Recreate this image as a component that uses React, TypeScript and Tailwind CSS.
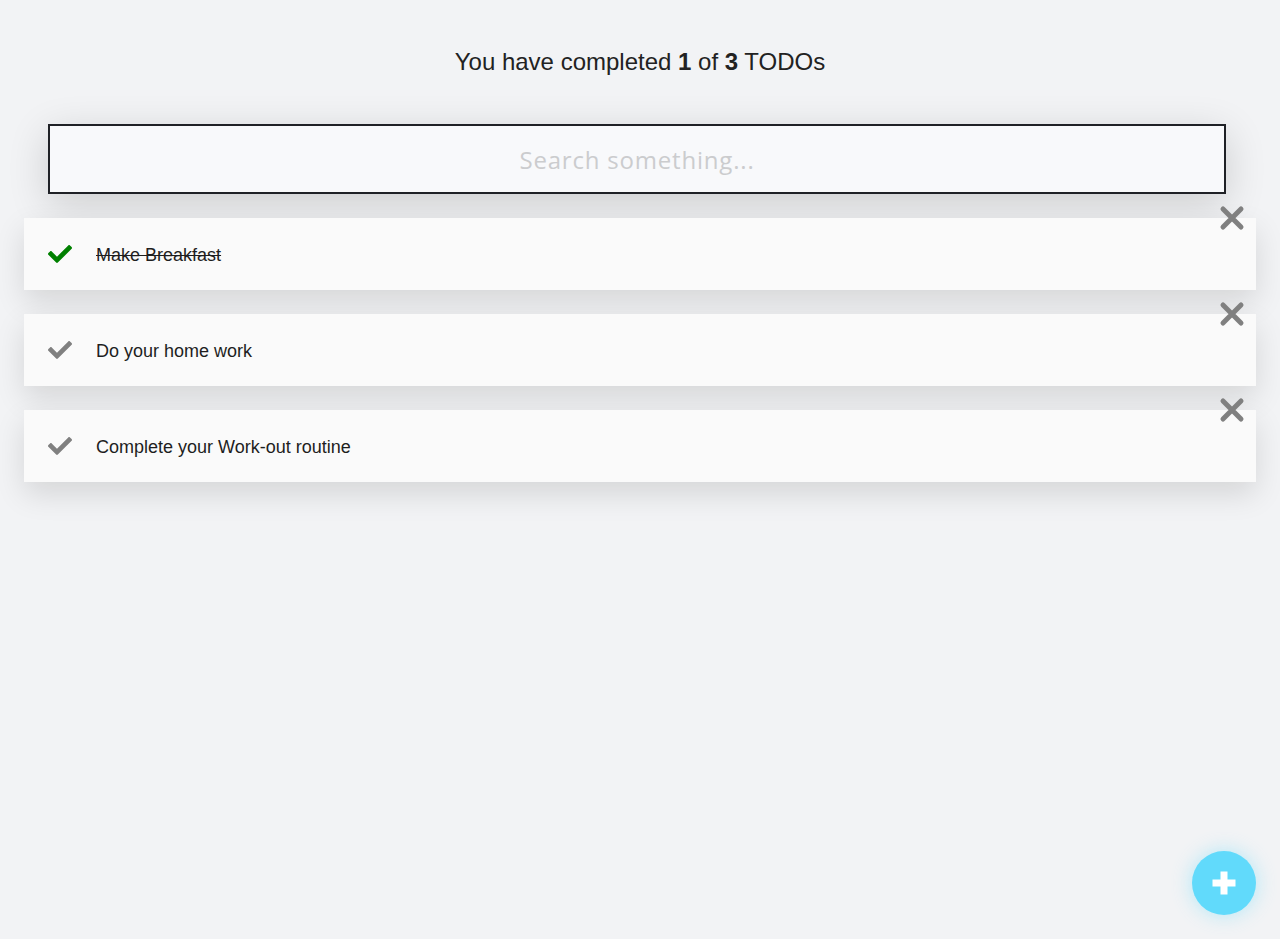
import React, { useState } from 'react';
import { FaCheck } from 'react-icons/fa';

type Todo = { id: number; title: string; done: boolean };

const initial: Todo[] = [
  { id: 1, title: 'Make Breakfast', done: true },
  { id: 2, title: 'Do your home work', done: false },
  { id: 3, title: 'Complete your Work-out routine', done: false },
];

function CloseIcon() {
  return (
    <svg width="26" height="26" viewBox="0 0 26 26" fill="none">
      <path d="M4 4 L22 22 M22 4 L4 22" stroke="#808080" strokeWidth="5" strokeLinecap="round" />
    </svg>
  );
}

function PlusIcon() {
  return (
    <svg width="24" height="24" viewBox="0 0 24 24" fill="white">
      <path d="M8.5 0.5h7v8h8v7h-8v8h-7v-8h-8v-7h8z" />
    </svg>
  );
}

export default function App() {
  const [todos, setTodos] = useState(initial);
  const [query, setQuery] = useState('');
  const completed = todos.filter((t) => t.done).length;

  const toggle = (id: number) =>
    setTodos(todos.map((t) => (t.id === id ? { ...t, done: !t.done } : t)));
  const remove = (id: number) => setTodos(todos.filter((t) => t.id !== id));

  const visible = todos.filter((t) => t.title.toLowerCase().includes(query.toLowerCase()));

  return (
    <div className="min-h-screen bg-[#f2f3f5] font-['Liberation_Sans',Arial,sans-serif] text-[#222]">
      <h1 className="pt-[44px] text-center text-[24px] leading-[36px]">
        You have completed <b>{completed}</b> of <b>{todos.length}</b> TODOs
      </h1>

      <div className="ml-[48px] mt-[44px] w-[1178px]">
        <input
          value={query}
          onChange={(e) => setQuery(e.target.value)}
          placeholder="Search something..."
          className="block h-[70px] w-full border-2 border-[#1f2126] bg-[#f8f9fb] text-center font-['Open_Sans',sans-serif] text-[24px] tracking-[0.8px] outline-none shadow-[0_10px_40px_rgba(0,0,0,0.16)] placeholder:text-[#cbccce]"
        />
      </div>

      <ul className="mx-[24px] mt-[24px] flex flex-col gap-[24px]">
        {visible.map((t) => (
          <li
            key={t.id}
            className="relative flex h-[72px] items-center bg-[#fafafa] pl-[24px] shadow-[0_12px_30px_rgba(0,0,0,0.12)]"
          >
            <button onClick={() => toggle(t.id)} className={t.done ? 'text-[#008000]' : 'text-[#808080]'}>
              <FaCheck size={24} />
            </button>
            <span className={`ml-[24px] mt-[2px] text-[18px] text-[#1e1e1e] ${t.done ? 'line-through' : ''}`}>
              {t.title}
            </span>
            <button onClick={() => remove(t.id)} className="absolute right-[11px] top-[-13px]">
              <CloseIcon />
            </button>
          </li>
        ))}
      </ul>

      <button className="fixed bottom-[24px] right-[24px] flex h-[64px] w-[64px] items-center justify-center rounded-full bg-[#61dafb] shadow-[0_0_20px_rgba(97,218,251,0.45)]">
        <PlusIcon />
      </button>
    </div>
  );
}
